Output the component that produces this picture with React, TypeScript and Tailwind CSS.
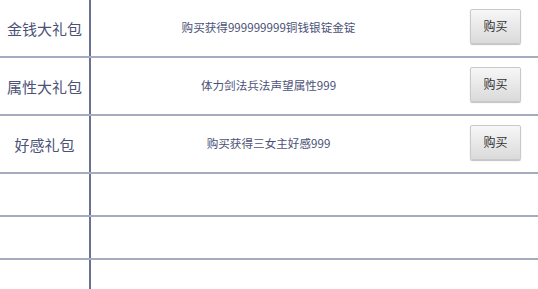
import React from 'react';

// --- DATA ---
const PACKS = [
  { name: '金钱大礼包', desc: '购买获得999999999铜钱银锭金锭' },
  { name: '属性大礼包', desc: '体力剑法兵法声望属性999' },
  { name: '好感礼包', desc: '购买获得三女主好感999' },
];

const FONT = { fontFamily: '"Noto Sans CJK SC", "Noto Sans", sans-serif' };

const BuyButton = () => (
  <button className="w-[51px] h-[35px] rounded-[2px] border border-[#c9c9c9] bg-gradient-to-b from-[#f7f7f7] to-[#dadada] shadow-[0_1px_1px_rgba(0,0,0,0.25)] text-[12px] text-[#333] mb-[4px]">
    购买
  </button>
);

export default function App() {
  return (
    <div className="w-[538px] h-[289px] bg-white overflow-hidden" style={FONT}>
      {PACKS.map(p => (
        <div key={p.name} className="flex h-[58px] border-b-2 border-[#a6abc1]">
          <div className="w-[91px] shrink-0 border-r-2 border-[#6b7193] flex items-center justify-center text-[15px] text-[#4b5276] pt-[2px]">
            {p.name}
          </div>
          <div className="w-[355px] flex items-center justify-center text-[11.6px] text-[#4b5276]">
            {p.desc}
          </div>
          <div className="flex-1 flex items-center justify-center pl-[7px]">
            <BuyButton />
          </div>
        </div>
      ))}
      {[43, 43].map((h, i) => (
        <div key={i} className="flex h-[43px] border-b-2 border-[#a6abc1]">
          <div className="w-[91px] shrink-0 border-r-2 border-[#6b7193]" />
        </div>
      ))}
      <div className="flex h-[40px]">
        <div className="w-[91px] shrink-0 border-r-2 border-[#6b7193]" />
      </div>
    </div>
  );
}
